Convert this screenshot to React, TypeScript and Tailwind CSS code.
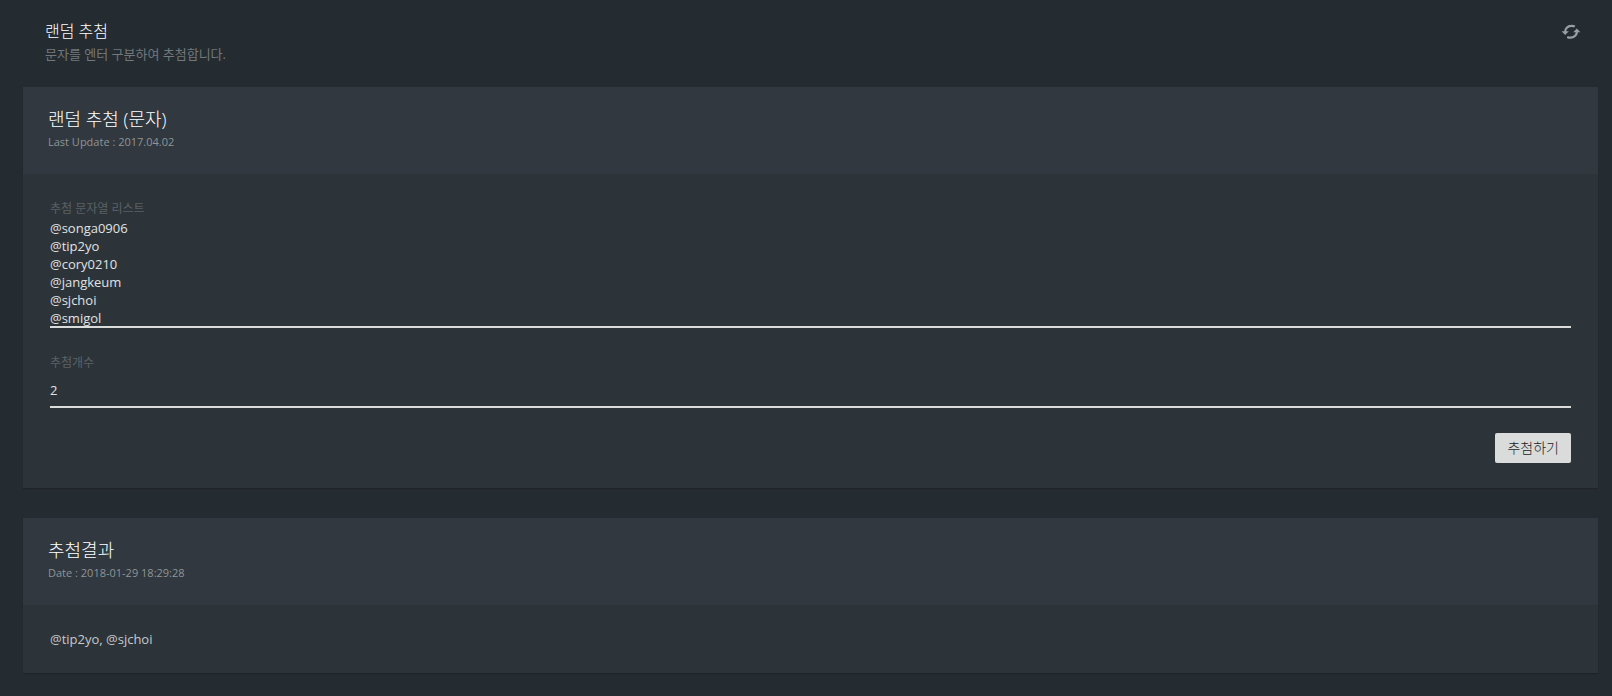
import { useState } from 'react'
import type { ReactNode } from 'react'

const PARTICIPANTS = ['@songa0906', '@tip2yo', '@cory0210', '@jangkeum', '@sjchoi', '@smigol']

function RefreshIcon() {
  return (
    <svg width="20" height="16" viewBox="0 0 20 16" fill="none" aria-hidden="true">
      <path d="M4.1 8A6 6 0 0 1 10 1.9Q12 1.7 13.8 2.6" stroke="currentColor" strokeWidth="2.2" />
      <path d="M15.9 7A6 6 0 0 1 10 13.6Q8 13.8 6.2 12.9" stroke="currentColor" strokeWidth="2.2" />
      <path d="M0.6 7.2h7.2L4.2 11z" fill="currentColor" />
      <path d="M19.4 8.3h-7.2L15.8 4.5z" fill="currentColor" />
    </svg>
  )
}

function Card({ title, subtitle, children }: { title: string; subtitle: string; children: ReactNode }) {
  return (
    <section className="bg-[#2c343a] shadow-[0_1px_1px_rgba(0,0,0,0.15)]">
      <header className="bg-[#31383f] px-[25px] pt-5 pb-[22px]">
        <h2 className="text-[18px] leading-6 font-light text-white">{title}</h2>
        <p className="text-[11px] leading-[21px] text-[#8f9496]">{subtitle}</p>
      </header>
      {children}
    </section>
  )
}

export default function App() {
  const [list, setList] = useState(PARTICIPANTS.join('\n'))
  const [count, setCount] = useState('2')

  return (
    <div className="min-h-screen bg-[#242b31] pl-[23px] pr-[14px] pb-5 font-['Open_Sans','Noto_Sans_CJK_KR',sans-serif]">
      <header className="flex items-start justify-between pt-5 pb-[22px] pl-[22px] pr-[17px]">
        <div>
          <h1 className="text-base leading-[22px] font-light text-white">랜덤 추첨</h1>
          <p className="mt-[2px] text-[13px] leading-[21px] text-[#72787b]">문자를 엔터 구분하여 추첨합니다.</p>
        </div>
        <button type="button" aria-label="새로고침" className="mt-1 text-[#9a9fa1]">
          <RefreshIcon />
        </button>
      </header>

      <main className="flex flex-col gap-[30px]">
        <Card title="랜덤 추첨 (문자)" subtitle="Last Update : 2017.04.02">
          <form className="px-[27px] pt-6 pb-[25px]" onSubmit={e => e.preventDefault()}>
            <label htmlFor="list" className="block text-xs leading-[21px] text-[#5a6165]">추첨 문자열 리스트</label>
            <textarea
              id="list"
              value={list}
              onChange={e => setList(e.target.value)}
              className="block h-[109px] w-full resize-none overflow-hidden border-b-2 border-[#d9dcda] bg-transparent text-[13px] leading-[18px] text-[#e0e2e2] outline-none"
            />
            <label htmlFor="count" className="mt-6 block text-xs leading-[21px] text-[#5a6165]">추첨개수</label>
            <input
              id="count"
              type="text"
              value={count}
              onChange={e => setCount(e.target.value)}
              className="block h-[35px] w-full border-b-2 border-[#d9dcda] bg-transparent text-[13px] text-[#e0e2e2] outline-none"
            />
            <div className="mt-[25px] flex justify-end">
              <button type="submit" className="rounded-xs bg-[#d9dcda] px-3 py-[5px] text-sm leading-5 font-light text-[#1d2226]">추첨하기</button>
            </div>
          </form>
        </Card>

        <Card title="추첨결과" subtitle="Date : 2018-01-29 18:29:28">
          <p className="px-[27px] py-6 text-[13px] leading-5 text-[#c6c9ca]">@tip2yo, @sjchoi</p>
        </Card>
      </main>
    </div>
  )
}
